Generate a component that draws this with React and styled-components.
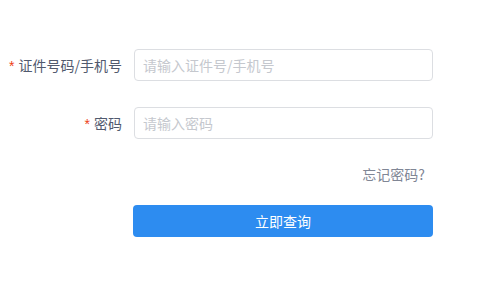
import React, { useState } from "react";
import styled, { createGlobalStyle } from "styled-components";

const GlobalStyle = createGlobalStyle`
  html, body {
    margin: 0;
    padding: 0;
    background: #fff;
  }
  body {
    font-family: "Noto Sans CJK SC", "Liberation Sans", sans-serif;
    font-size: 14px;
    color: #515a6e;
  }
`;

const Form = styled.form`
  width: 433px;
  padding-top: 49px;
  display: flex;
  flex-direction: column;
`;

const FormItem = styled.div`
  display: flex;
  align-items: center;
  height: 32px;
  margin-bottom: 26px;
`;

const Label = styled.label`
  width: 134px;
  box-sizing: border-box;
  padding-right: 12px;
  text-align: right;
  font-size: 14px;
  line-height: 20px;
  color: #515a6e;
  white-space: nowrap;
`;

const Required = styled.span`
  color: #ed4014;
  margin-right: 4px;
  font-family: "Liberation Sans", sans-serif;
`;

const Input = styled.input`
  flex: 1;
  height: 32px;
  box-sizing: border-box;
  padding: 0 8px;
  border: 1px solid #dcdee2;
  border-radius: 4px;
  font-family: inherit;
  font-size: 14px;
  color: #515a6e;
  outline: none;

  &::placeholder {
    color: #c5c8ce;
  }
`;

const LinkRow = styled.div`
  display: flex;
  justify-content: flex-end;
  padding-right: 8px;
  margin-top: -1px;
  line-height: 20px;
`;

const ForgotLink = styled.a`
  font-size: 14px;
  color: #808695;
  text-decoration: none;
  cursor: pointer;
`;

const ButtonRow = styled.div`
  display: flex;
  padding-left: 133px;
  margin-top: 21px;
`;

const SubmitButton = styled.button`
  flex: 1;
  height: 32px;
  border: none;
  border-radius: 4px;
  background: #2d8cf0;
  color: #fff;
  font-family: inherit;
  font-size: 14px;
  cursor: pointer;
`;

const App = () => {
  const [account, setAccount] = useState("");
  const [password, setPassword] = useState("");

  return (
    <>
      <GlobalStyle />
      <Form onSubmit={(e) => e.preventDefault()}>
        <FormItem>
          <Label>
            <Required>*</Required>证件号码/手机号
          </Label>
          <Input
            value={account}
            onChange={(e) => setAccount(e.target.value)}
            placeholder="请输入证件号/手机号"
          />
        </FormItem>
        <FormItem>
          <Label>
            <Required>*</Required>密码
          </Label>
          <Input
            type="password"
            value={password}
            onChange={(e) => setPassword(e.target.value)}
            placeholder="请输入密码"
          />
        </FormItem>
        <LinkRow>
          <ForgotLink>忘记密码?</ForgotLink>
        </LinkRow>
        <ButtonRow>
          <SubmitButton type="submit">立即查询</SubmitButton>
        </ButtonRow>
      </Form>
    </>
  );
};

export default App;
